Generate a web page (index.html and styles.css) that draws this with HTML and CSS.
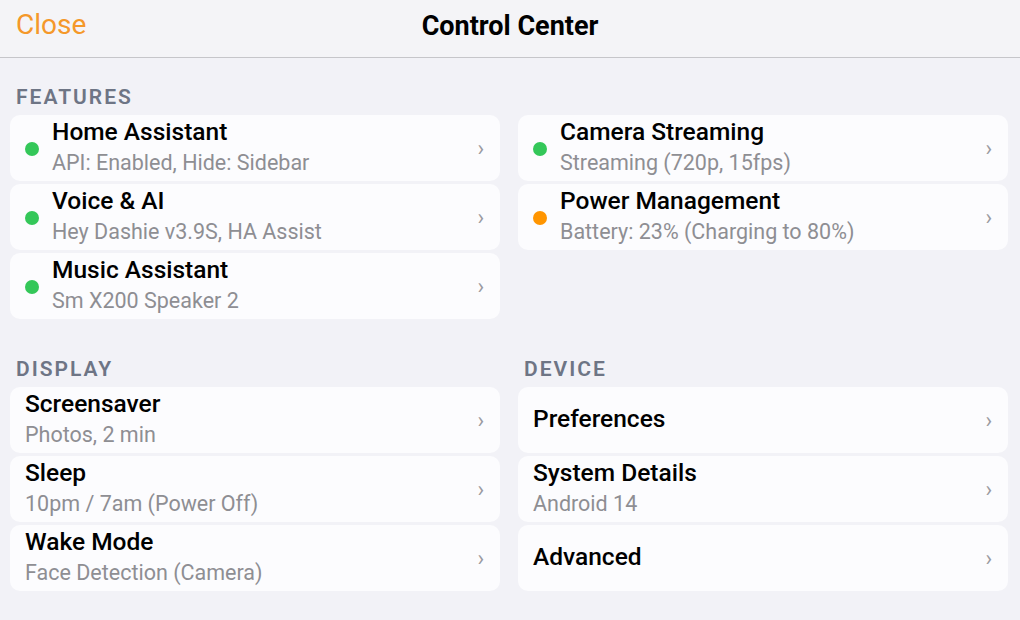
FILE: index.html
```html
<!DOCTYPE html>
<html>
<head>
<meta charset="utf-8">
<link rel="stylesheet" href="styles.css">
</head>
<body>
<header class="topbar">
  <span class="close">Close</span>
  <h1 class="title">Control Center</h1>
</header>
<main class="content">
  <section class="section">
    <h2 class="label">FEATURES</h2>
    <div class="grid">
      <div class="card"><span class="dot green"></span><div class="text"><div class="t">Home Assistant</div><div class="s">API: Enabled, Hide: Sidebar</div></div><span class="chev">›</span></div>
      <div class="card"><span class="dot green"></span><div class="text"><div class="t">Camera Streaming</div><div class="s">Streaming (720p, 15fps)</div></div><span class="chev">›</span></div>
      <div class="card"><span class="dot green"></span><div class="text"><div class="t">Voice &amp; AI</div><div class="s">Hey Dashie v3.9S, HA Assist</div></div><span class="chev">›</span></div>
      <div class="card"><span class="dot orange"></span><div class="text"><div class="t">Power Management</div><div class="s">Battery: 23% (Charging to 80%)</div></div><span class="chev">›</span></div>
      <div class="card"><span class="dot green"></span><div class="text"><div class="t">Music Assistant</div><div class="s">Sm X200 Speaker 2</div></div><span class="chev">›</span></div>
    </div>
  </section>
  <div class="split">
    <section class="section col">
      <h2 class="label">DISPLAY</h2>
      <div class="list">
        <div class="card plain"><div class="text"><div class="t">Screensaver</div><div class="s">Photos, 2 min</div></div><span class="chev">›</span></div>
        <div class="card plain"><div class="text"><div class="t">Sleep</div><div class="s">10pm / 7am (Power Off)</div></div><span class="chev">›</span></div>
        <div class="card plain"><div class="text"><div class="t">Wake Mode</div><div class="s">Face Detection (Camera)</div></div><span class="chev">›</span></div>
      </div>
    </section>
    <section class="section col">
      <h2 class="label">DEVICE</h2>
      <div class="list">
        <div class="card plain"><div class="text"><div class="t">Preferences</div></div><span class="chev">›</span></div>
        <div class="card plain"><div class="text"><div class="t">System Details</div><div class="s">Android 14</div></div><span class="chev">›</span></div>
        <div class="card plain"><div class="text"><div class="t">Advanced</div></div><span class="chev">›</span></div>
      </div>
    </section>
  </div>
</main>
</body>
</html>
```
FILE: styles.css
```css
* { box-sizing: border-box; }
html, body { margin: 0; padding: 0; }
body {
  background: #f2f2f7;
  font-family: Roboto, "Noto Sans", sans-serif;
  width: 1020px;
  height: 620px;
  overflow: hidden;
}
.topbar {
  height: 58px;
  background: #f4f4f7;
  border-bottom: 1px solid #c6c6ca;
  display: flex;
  align-items: flex-start;
  justify-content: center;
  position: relative;
}
.close {
  position: absolute;
  left: 16px;
  top: 9px;
  font-size: 28px;
  line-height: 32px;
  color: #f4982a;
}
.title {
  margin: 10px 0 0 0;
  font-size: 27px;
  font-weight: 700;
  color: #000;
  line-height: 32px;
}
.content {
  padding: 25px 12px 0 10px;
}
.label {
  margin: 0 0 4px 6px;
  font-size: 21px;
  line-height: 28px;
  font-weight: 600;
  letter-spacing: 2px;
  color: #6e7585;
}
.grid {
  display: grid;
  grid-template-columns: 1fr 1fr;
  column-gap: 18px;
  row-gap: 3px;
  align-items: start;
}
.split {
  display: grid;
  grid-template-columns: 1fr 1fr;
  column-gap: 18px;
  margin-top: 36px;
}
.list {
  display: flex;
  flex-direction: column;
  gap: 3px;
}
.card {
  height: 66px;
  background: #fcfcfe;
  border-radius: 10px;
  display: flex;
  align-items: center;
  padding: 0 16px 0 15px;
}
.dot {
  width: 14px;
  height: 14px;
  border-radius: 50%;
  flex: none;
  margin-right: 13px;
  margin-top: 2px;
}
.green { background: #34c759; }
.orange { background: #ff9500; }
.text {
  flex: 1;
  display: flex;
  flex-direction: column;
  margin-bottom: 2px;
}
.t {
  font-size: 24.5px;
  line-height: 28px;
  font-weight: 500;
  color: #000;
}
.s {
  font-size: 21.5px;
  line-height: 26px;
  margin-top: 4px;
  color: #8e8e93;
}
.chev {
  flex: none;
  font-size: 22px;
  color: #9a9aa0;
  line-height: 22px;
  margin-top: 2px;
}
```
